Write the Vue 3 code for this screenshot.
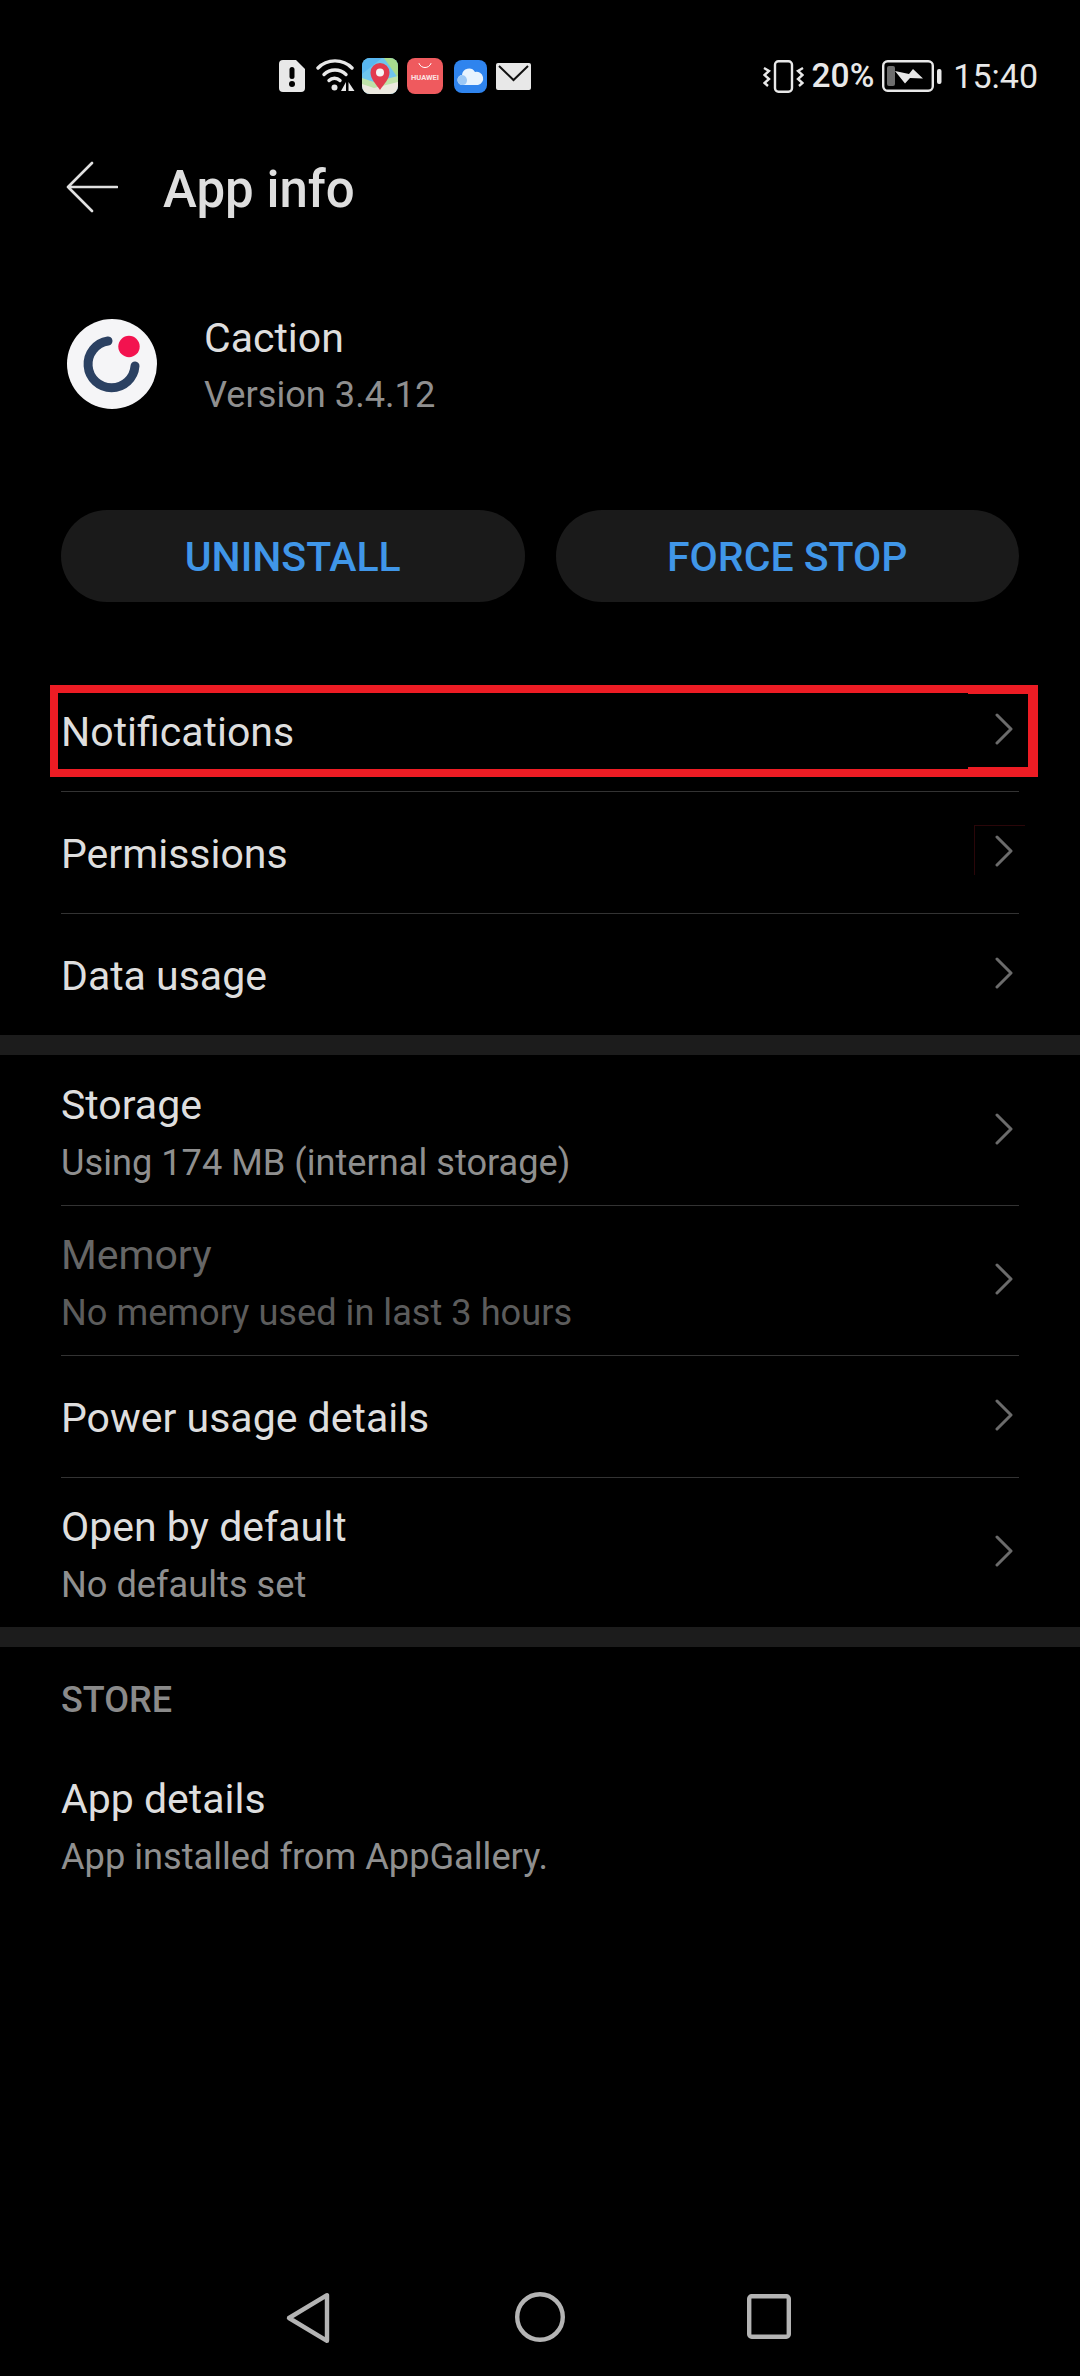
<script setup>
const group1 = [
  { title: 'Notifications' },
  { title: 'Permissions', outlined: true },
  { title: 'Data usage' },
]
const group2 = [
  { title: 'Storage', sub: 'Using 174 MB (internal storage)' },
  { title: 'Memory', sub: 'No memory used in last 3 hours', dim: true },
  { title: 'Power usage details' },
  { title: 'Open by default', sub: 'No defaults set' },
]
</script>

<template>
  <div class="screen">
    <div class="status">
      <div class="status-left">
        <svg class="i-alert" width="26" height="32" viewBox="0 0 26 32">
          <path d="M4 0H17L26 9V28a4 4 0 0 1-4 4H4a4 4 0 0 1-4-4V4a4 4 0 0 1 4-4Z" fill="#e8e8e8" />
          <rect x="10.5" y="7" width="5" height="12" rx="2.5" fill="#000" />
          <circle cx="13" cy="24" r="3" fill="#000" />
        </svg>
        <svg class="i-wifi" width="40" height="34" viewBox="0 0 40 34">
          <g fill="none" stroke="#e8e8e8" stroke-width="3.400" stroke-linecap="round">
            <path d="M2 9C11 -0.500 27 -0.500 36 9" />
            <path d="M8 15.500C14 9.500 24 9.500 30 15.500" />
            <path d="M13 21.500C16 18.500 21 18.500 24 21.500" />
          </g>
          <circle cx="18.500" cy="28.500" r="3" fill="#e8e8e8" />
          <path d="M30 23V32H25ZM32.500 23V32H38.500Z" fill="#e8e8e8" />
        </svg>
        <svg class="i-app" width="36" height="36" viewBox="0 0 36 36">
          <defs>
            <clipPath id="mapclip"><rect width="36" height="36" rx="8" /></clipPath>
          </defs>
          <g clip-path="url(#mapclip)">
            <rect width="36" height="36" fill="#6fc6ee" />
            <path d="M0 0H20L0 16Z" fill="#59b7f0" />
            <path d="M22 0H36V20Z" fill="#a8dc8e" />
            <path d="M0 26L36 20V36H0Z" fill="#ece9df" />
            <path d="M0 20L12 24L36 18V24L12 30L0 26Z" fill="#bfe3a9" />
          </g>
          <path d="M18 32C14 26 8.500 21 8.500 14.500a9.500 9.500 0 0 1 19 0C27.500 21 22 26 18 32Z" fill="#e23b4e" />
          <circle cx="18" cy="14.500" r="4" fill="#f5f5f5" />
        </svg>
        <div class="i-huawei">
          <svg width="14" height="6" viewBox="0 0 14 6" class="bag">
            <path d="M1 0.500C3 6 11 6 13 0.500" fill="none" stroke="#fff" stroke-width="1" stroke-linecap="round" />
          </svg>
          <span class="huawei-word">HUAWEI</span>
        </div>
        <svg class="i-cloud" width="33" height="33" viewBox="0 0 33 33">
          <rect width="33" height="33" rx="8" fill="#2f84ee" />
          <path d="M9 25a5 5 0 0 1-1-10 7 7 0 0 1 13-3 6.500 6.500 0 0 1 3 13Z" fill="#e8f3fe" />
          <path d="M9 25a5 5 0 0 1-1-10c3 0 5 3 5 5s-1 5-4 5Z" fill="#9cc8f6" />
        </svg>
        <svg class="i-mail" width="35" height="27" viewBox="0 0 35 27">
          <rect width="35" height="27" rx="2" fill="#e8e8e8" />
          <path d="M3 3L17.500 17L32 3" fill="none" stroke="#111" stroke-width="2" />
        </svg>
      </div>
      <div class="status-right">
        <svg width="41" height="33" viewBox="0 0 41 33">
          <rect x="12" y="1.200" width="17" height="30.600" rx="3.500" fill="none" stroke="#e8e8e8" stroke-width="2.400" />
          <path d="M1 8L6 11L1.500 15L6 19L1.500 23L5 26" fill="none" stroke="#e8e8e8" stroke-width="2.400" />
          <path d="M40 8L35 11L39.500 15L35 19L39.500 23L36 26" fill="none" stroke="#e8e8e8" stroke-width="2.400" />
        </svg>
        <span class="pct">20%</span>
        <svg width="60" height="32" viewBox="0 0 60 32">
          <rect x="1.200" y="1.200" width="49.600" height="29.600" rx="4.500" fill="none" stroke="#e8e8e8" stroke-width="2.400" />
          <rect x="5" y="6" width="8" height="20" rx="2" fill="#6e6e6e" />
          <path d="M13 11L27 14L31 9L41 18.500L28 18L23 23.500Z" fill="#e8e8e8" />
          <rect x="55" y="9" width="4.500" height="15" rx="2" fill="#e8e8e8" />
        </svg>
        <span class="clock">15:40</span>
      </div>
    </div>

    <header class="appbar">
      <svg width="52" height="52" viewBox="0 0 52 52">
        <path d="M51 26H2M26 2L2 26L26 50" fill="none" stroke="#e0e0e0" stroke-width="2.600" stroke-linecap="round" stroke-linejoin="round" />
      </svg>
      <h1>App info</h1>
    </header>

    <section class="app-head">
      <svg width="90" height="90" viewBox="0 0 90 90">
        <circle cx="45" cy="45" r="45" fill="#f5f5f7" />
        <path d="M41 22A23.500 23.500 0 1 0 68 47" fill="none" stroke="#2b4162" stroke-width="9" stroke-linecap="round" />
        <circle cx="62" cy="27.500" r="10.700" fill="#f3134f" />
      </svg>
      <div class="app-meta">
        <div class="app-name">Caction</div>
        <div class="app-ver">Version 3.4.12</div>
      </div>
    </section>

    <div class="buttons">
      <button class="pill">UNINSTALL</button>
      <button class="pill">FORCE STOP</button>
    </div>

    <div class="list first">
      <div class="highlight"></div>
      <div v-for="r in group1" :key="r.title" class="row">
        <span class="title">{{ r.title }}</span>
        <span class="chev-wrap" :class="{ outlined: r.outlined }">
          <svg class="chev" width="18" height="32" viewBox="0 0 18 32">
            <path d="M2 2L16 16L2 30" fill="none" stroke="#6b6b6b" stroke-width="3" stroke-linecap="round" stroke-linejoin="round" />
          </svg>
        </span>
      </div>
    </div>

    <div class="bar"></div>

    <div class="list second">
      <div v-for="r in group2" :key="r.title" class="row">
        <div class="col" :class="{ 'has-sub': r.sub }">
          <span class="title" :class="{ dim: r.dim }">{{ r.title }}</span>
          <span v-if="r.sub" class="sub" :class="{ dim: r.dim }">{{ r.sub }}</span>
        </div>
        <span class="chev-wrap">
          <svg class="chev" width="18" height="32" viewBox="0 0 18 32">
            <path d="M2 2L16 16L2 30" fill="none" stroke="#6b6b6b" stroke-width="3" stroke-linecap="round" stroke-linejoin="round" />
          </svg>
        </span>
      </div>
    </div>

    <div class="bar"></div>

    <div class="store-label">STORE</div>
    <div class="details">
      <span class="title">App details</span>
      <span class="sub">App installed from AppGallery.</span>
    </div>

    <nav class="navbar">
      <svg width="46" height="52" viewBox="0 0 46 52">
        <path d="M4 26L42 3.200V48.800Z" fill="none" stroke="#b4b4b4" stroke-width="4.400" stroke-linejoin="round" />
      </svg>
      <svg width="50" height="50" viewBox="0 0 50 50">
        <circle cx="25" cy="25" r="22.800" fill="none" stroke="#b4b4b4" stroke-width="4.400" />
      </svg>
      <svg width="44" height="45" viewBox="0 0 44 45">
        <rect x="2.200" y="2.200" width="39.600" height="40.600" rx="2.500" fill="none" stroke="#b4b4b4" stroke-width="4.400" />
      </svg>
    </nav>
  </div>
</template>

<style>
html, body { margin: 0; background: #000; }
</style>

<style scoped>
.screen {
  position: relative;
  width: 1080px;
  height: 2376px;
  background: #000;
  font-family: Roboto, "Liberation Sans", sans-serif;
  color: #dedede;
  overflow: hidden;
}
.status {
  height: 111px;
  padding: 0 42px 0 279px;
  box-sizing: border-box;
  display: flex;
  justify-content: space-between;
  align-items: flex-end;
}
.status-left, .status-right { display: flex; align-items: center; height: 36px; margin-bottom: 17px; }
.status-left { gap: 9px; }
.i-alert { margin-right: 2px; }
.i-wifi { margin-right: -3px; }
.i-huawei {
  width: 36px;
  height: 36px;
  border-radius: 8px;
  background: #ef5a5e;
  display: flex;
  flex-direction: column;
  align-items: center;
  margin-right: 2px;
}
.bag { margin-top: 5px; }
.huawei-word {
  font-size: 7.500px;
  font-weight: 700;
  color: #fbe3e3;
  line-height: 9px;
  margin-top: 4px;
}
.status-right { gap: 8px; }
.pct, .clock { font-size: 33.500px; font-weight: 500; color: #e8e8e8; line-height: 36px; }
.clock { margin-left: 3px; font-size: 34px; font-weight: 400; }
.appbar {
  height: 76px;
  margin-top: 38px;
  padding-left: 66px;
  display: flex;
  align-items: center;
}
.appbar h1 {
  margin: 0 0 0 45px;
  padding-top: 5px;
  font-size: 51px;
  font-weight: 500;
  color: #dedede;
}
.app-head {
  margin-top: 81px;
  padding-left: 67px;
  display: flex;
  align-items: center;
  height: 116px;
}
.app-meta { margin-left: 47px; padding-top: 5px; display: flex; flex-direction: column; }
.app-name { font-size: 41px; line-height: 57px; color: #dedede; }
.app-ver { font-size: 36.200px; line-height: 56px; color: #8f8f8f; }
.buttons {
  margin-top: 88px;
  padding: 0 61px;
  display: flex;
  gap: 31px;
}
.pill {
  flex: 1;
  height: 92px;
  border: 0;
  padding: 2px 0 0;
  border-radius: 46px;
  background: #1a1a1a;
  color: #4096e8;
  font: 500 41px Roboto, sans-serif;
}
.list { padding: 0 61px; position: relative; }
.list.first { margin-top: 68px; }
.highlight {
  position: absolute;
  left: 50px;
  top: 15px;
  width: 988px;
  height: 92px;
  box-sizing: border-box;
  border: 8px solid #ed1c24;
  border-right-width: 10px;
  pointer-events: none;
}
.highlight::before,
.highlight::after {
  content: "";
  position: absolute;
  left: 910px;
  right: 0;
  background: #ed1c24;
}
.highlight::before { top: 0; height: 1px; }
.highlight::after { bottom: 0; height: 2px; }
.row {
  display: flex;
  align-items: center;
  justify-content: space-between;
  box-sizing: border-box;
  border-bottom: 1px solid #333;
  height: 122px;
  padding-top: 3px;
}
.row:last-child { border-bottom: 0; }
.first .row:last-child { height: 121px; }
.second .row:nth-child(1) { height: 151px; }
.second .row:nth-child(2) { height: 150px; }
.second .row:nth-child(3) { height: 122px; }
.second .row:nth-child(4) { height: 149px; }
.col { display: flex; flex-direction: column; }
.col.has-sub { padding-top: 4px; }
.title { font-size: 41px; line-height: 57px; color: #dedede; }
.sub { font-size: 36.200px; line-height: 57px; color: #8f8f8f; }
.title.dim { color: #666; }
.sub.dim { color: #5c5c5c; }
.chev-wrap {
  position: relative;
  display: flex;
  margin: -6px 6px 0 0;
}
.outlined::before {
  content: "";
  position: absolute;
  left: -21px;
  top: -10px;
  width: 51px;
  height: 50px;
  border-left: 1px solid #2a0609;
  border-top: 1px solid #2a0609;
  box-sizing: border-box;
}
.bar { height: 20px; background: #1c1c1c; }
.store-label {
  margin: 33px 0 0 61px;
  font-size: 36px;
  font-weight: 500;
  line-height: 40px;
  color: #8a8a8a;
}
.details {
  margin: 51px 0 0 61px;
  display: flex;
  flex-direction: column;
}
.navbar { position: absolute; left: 0; right: 0; top: 2292px; height: 52px; }
.navbar svg { position: absolute; top: 0; }
.navbar svg:nth-child(1) { left: 285px; }
.navbar svg:nth-child(2) { left: 515px; }
.navbar svg:nth-child(3) { left: 747px; top: 2px; }
</style>
